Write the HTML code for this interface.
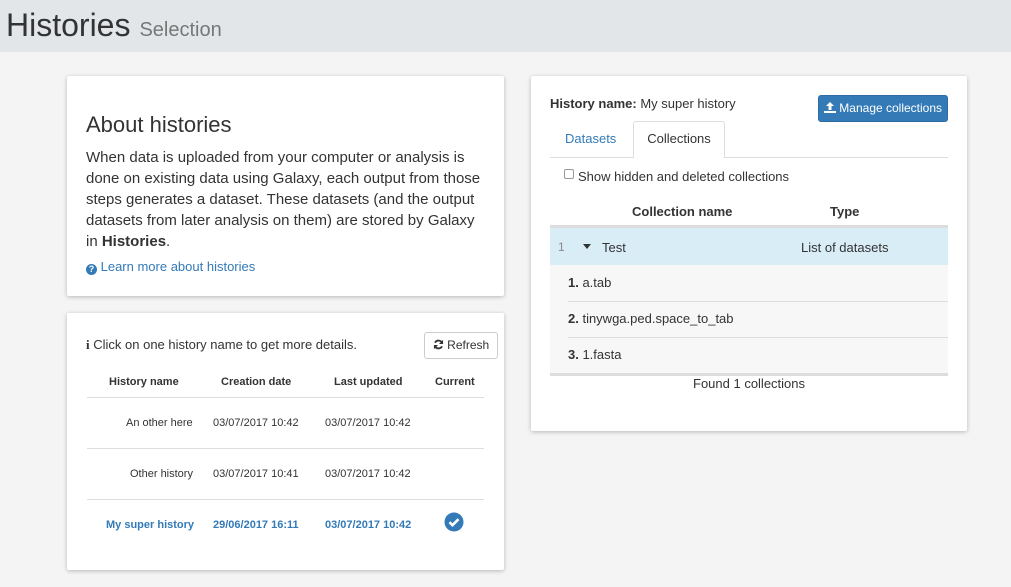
<!DOCTYPE html>
<html><head><style>
*{box-sizing:border-box;margin:0;padding:0}
body{width:1011px;height:587px;overflow:hidden;background:#f4f4f4;font-family:"Liberation Sans",sans-serif;color:#333;position:relative}
.hdr{position:absolute;left:0;top:0;width:1011px;height:52px;background:#e3e6e9}
.hdr h1{position:absolute;left:6px;top:7px;font-size:32px;font-weight:normal;color:#333;white-space:nowrap}
.hdr h1 small{font-size:20px;color:#777;margin-left:9px}
.card{position:absolute;background:#fff;box-shadow:0 1px 4px rgba(0,0,0,.25);border-radius:2px}
.a{position:absolute;white-space:nowrap}
.link{color:#337ab7}
.b{font-weight:bold}
.hl{position:absolute;height:1px;background:#ddd}
</style></head><body>
<div class="hdr"><h1>Histories<small>Selection</small></h1></div>

<div class="card" style="left:67px;top:76px;width:437px;height:220px">
<div class="a" style="left:19px;top:36px;font-size:22px">About histories</div>
<div class="a" style="left:19px;top:71px;font-size:15px;line-height:21px">When data is uploaded from your computer or analysis is<br>done on existing data using Galaxy, each output from those<br>steps generates a dataset. These datasets (and the output<br>datasets from later analysis on them) are stored by Galaxy<br>in <b>Histories</b>.</div>
<div class="a link" style="left:19px;top:183px;font-size:13px"><span style="display:inline-block;width:11px;height:11px;border-radius:50%;background:#337ab7;color:#fff;font-size:9px;text-align:center;line-height:11px;font-weight:bold;vertical-align:-1px">?</span> Learn more about histories</div>
</div>

<div class="card" style="left:67px;top:313px;width:437px;height:257px">
<div class="a" style="left:19px;top:24px;font-size:13px"><b style="font-family:'Liberation Serif',serif">i</b> Click on one history name to get more details.</div>
<div class="a" style="left:357px;top:19px;width:74px;height:27px;border:1px solid #ccc;border-radius:3px;font-size:12px;line-height:25px;text-align:center"><svg width="11" height="11" viewBox="0 0 12 12" style="vertical-align:-1px"><path d="M10 4.5A4.3 4.3 0 0 0 2.2 4M2 7.5A4.3 4.3 0 0 0 9.8 8" stroke="#333" stroke-width="2" fill="none"/><path d="M11 1v4.5H6.5zM1 11V6.5h4.5z" fill="#333"/></svg> Refresh</div>
<div class="a b" style="left:42px;top:63px;font-size:11px">History name</div>
<div class="a b" style="left:154px;top:63px;font-size:11px">Creation date</div>
<div class="a b" style="left:267px;top:63px;font-size:11px">Last updated</div>
<div class="a b" style="left:368px;top:63px;font-size:11px">Current</div>
<div class="hl" style="left:20px;top:84px;width:397px"></div>
<div class="a" style="left:59px;top:104px;font-size:11px">An other here</div>
<div class="a" style="left:146px;top:104px;font-size:11px">03/07/2017 10:42</div>
<div class="a" style="left:258px;top:104px;font-size:11px">03/07/2017 10:42</div>
<div class="hl" style="left:20px;top:135px;width:397px"></div>
<div class="a" style="left:63px;top:155px;font-size:11px">Other history</div>
<div class="a" style="left:146px;top:155px;font-size:11px">03/07/2017 10:41</div>
<div class="a" style="left:258px;top:155px;font-size:11px">03/07/2017 10:42</div>
<div class="hl" style="left:20px;top:186px;width:397px"></div>
<div class="a b link" style="left:39px;top:206px;font-size:11px">My super history</div>
<div class="a b link" style="left:146px;top:206px;font-size:11px">29/06/2017 16:11</div>
<div class="a b link" style="left:258px;top:206px;font-size:11px">03/07/2017 10:42</div>
<svg class="a" style="left:377px;top:199px" width="20" height="20" viewBox="0 0 20 20"><circle cx="10" cy="10" r="9.5" fill="#337ab7"/><path d="M5.5 10.2l3 3 6-6" stroke="#fff" stroke-width="2.6" fill="none"/></svg>
</div>

<div class="card" style="left:531px;top:76px;width:436px;height:355px">
<div class="a" style="left:19px;top:20px;font-size:13px"><b>History name:</b> My super history</div>
<div class="a" style="left:287px;top:19px;width:130px;height:27px;background:#337ab7;border:1px solid #2e6da4;border-radius:3px;color:#fff;font-size:12px;line-height:25px;text-align:center"><svg width="12" height="11" viewBox="0 0 12 11" style="vertical-align:-1px"><path d="M6 0L2 4h2.5v4h3V4H10z" fill="#fff"/><path d="M0 9h12v2H0z" fill="#fff"/></svg> Manage collections</div>
<div class="hl" style="left:19px;top:81px;width:398px"></div>
<div class="a link" style="left:34px;top:55px;font-size:13px">Datasets</div>
<div class="a" style="left:102px;top:45px;width:92px;height:37px;background:#fff;border:1px solid #ddd;border-bottom:none;border-radius:3px 3px 0 0;font-size:13px;text-align:center;line-height:34px">Collections</div>
<div class="a" style="left:33px;top:93px;width:10px;height:10px;border:1px solid #999;border-radius:2px"></div>
<div class="a" style="left:47px;top:93px;font-size:13px">Show hidden and deleted collections</div>
<div class="a b" style="left:101px;top:128px;font-size:13px">Collection name</div>
<div class="a b" style="left:299px;top:128px;font-size:13px">Type</div>
<div class="a" style="left:19px;top:149px;width:398px;height:3px;background:#ddd"></div>
<div class="a" style="left:19px;top:152px;width:398px;height:37px;background:#d9edf7"></div>
<div class="a" style="left:27px;top:164px;font-size:12px;color:#888">1</div>
<div class="a" style="left:52px;top:168px;width:0;height:0;border-left:4px solid transparent;border-right:4px solid transparent;border-top:5px solid #333"></div>
<div class="a" style="left:71px;top:164px;font-size:13px">Test</div>
<div class="a" style="left:270px;top:164px;font-size:13px">List of datasets</div>
<div class="a" style="left:19px;top:189px;width:398px;height:108px;background:#f7f7f7"></div>
<div class="a" style="left:37px;top:199px;font-size:13px"><b>1.</b> a.tab</div>
<div class="hl" style="left:37px;top:225px;width:380px"></div>
<div class="a" style="left:37px;top:235px;font-size:13px"><b>2.</b> tinywga.ped.space_to_tab</div>
<div class="hl" style="left:37px;top:261px;width:380px"></div>
<div class="a" style="left:37px;top:271px;font-size:13px"><b>3.</b> 1.fasta</div>
<div class="a" style="left:19px;top:297px;width:398px;height:3px;background:#ddd"></div>
<div class="a" style="left:162px;top:300px;font-size:13px">Found 1 collections</div>
</div>
</body></html>
